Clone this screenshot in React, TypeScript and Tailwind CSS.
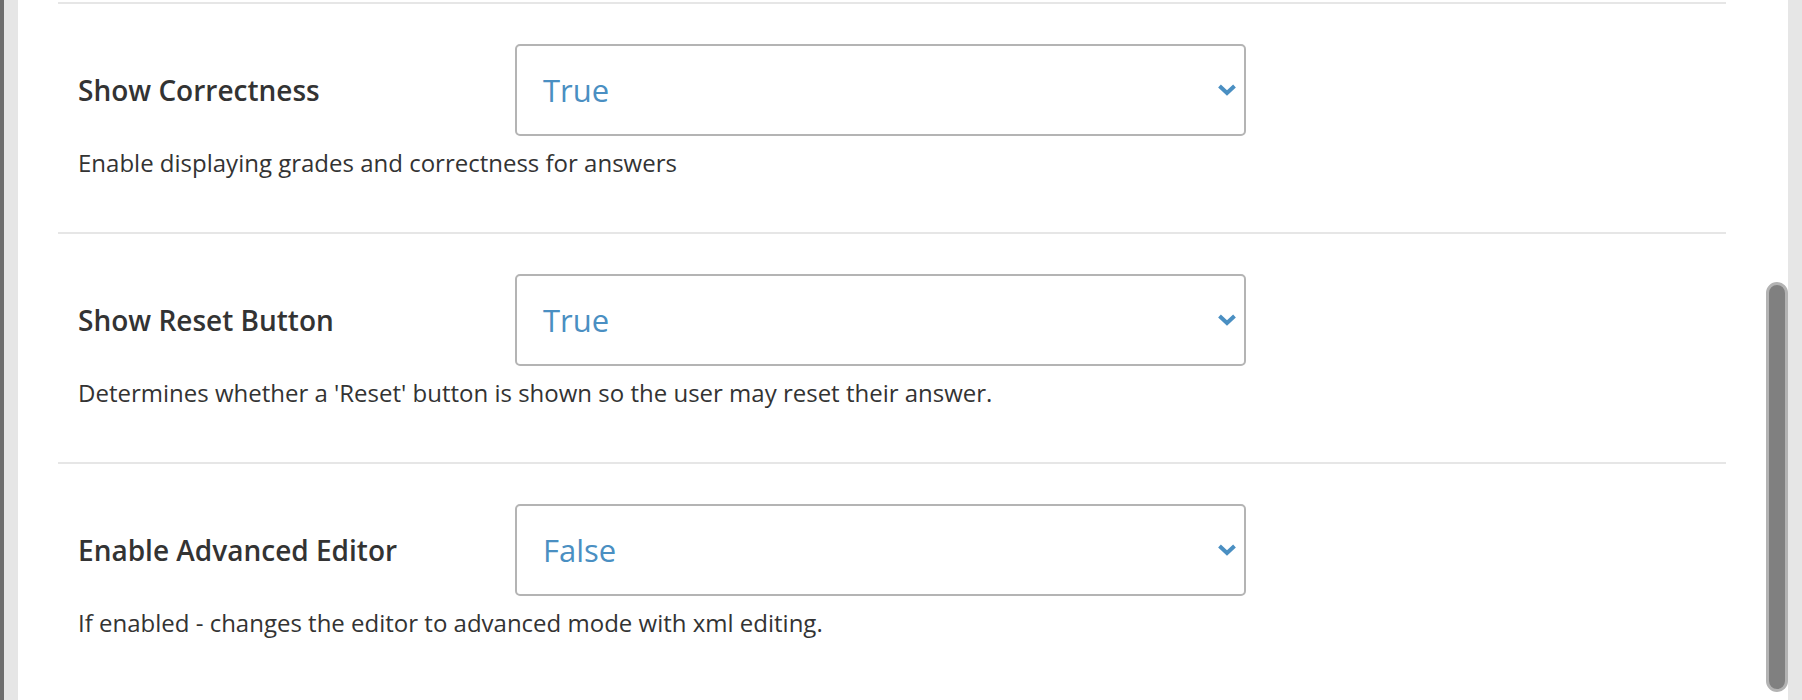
import React from 'react';

interface Setting {
  label: string;
  value: string;
  description: string;
}

const settings: Setting[] = [
  {
    label: 'Show Correctness',
    value: 'True',
    description: 'Enable displaying grades and correctness for answers',
  },
  {
    label: 'Show Reset Button',
    value: 'True',
    description: "Determines whether a 'Reset' button is shown so the user may reset their answer.",
  },
  {
    label: 'Enable Advanced Editor',
    value: 'False',
    description: 'If enabled - changes the editor to advanced mode with xml editing.',
  },
];

const Chevron = () => (
  <svg width="20" height="14" viewBox="0 0 20 14" className="shrink-0">
    <path d="M2.5 3 L10 10 L17.5 3" fill="none" stroke="#4a8fc2" strokeWidth="4" />
  </svg>
);

const SettingRow: React.FC<{ setting: Setting }> = ({ setting }) => (
  <div className="h-[230px] border-t-2 border-[#e6e6e6] pl-[20px] pt-[40px]">
    <div className="flex items-center">
      <div className="w-[437px] text-[28px] font-semibold text-[#333333]">{setting.label}</div>
      <div className="flex h-[92px] w-[731px] items-center justify-between rounded-[5px] border-2 border-[#b4b4b4] bg-white pl-[26px] pr-[7px]">
        <span className="text-[31px] text-[#4a8fc2]">{setting.value}</span>
        <Chevron />
      </div>
    </div>
    <p className="mt-[9px] text-[24px] text-[#333333]">{setting.description}</p>
  </div>
);

export default function App() {
  return (
    <div
      className="flex h-[700px] w-[1802px] overflow-hidden bg-white"
      style={{ fontFamily: '"Open Sans", "Noto Sans", sans-serif' }}
    >
      <div className="w-[4px] bg-[#6e6e6e]" />
      <div className="w-[14px] bg-[#e6e6e6]" />
      <div className="flex-1 pl-[40px] pr-[40px] pt-[2px]">
        {settings.map((s) => (
          <SettingRow key={s.label} setting={s} />
        ))}
      </div>
      <div className="w-[22px] pt-[282px]">
        <div className="h-[410px] w-[22px] rounded-full border-[3px] border-[#b3b3b3] bg-[#808080]" />
      </div>
      <div className="w-[14px] bg-[#e6e6e6]" />
    </div>
  );
}
